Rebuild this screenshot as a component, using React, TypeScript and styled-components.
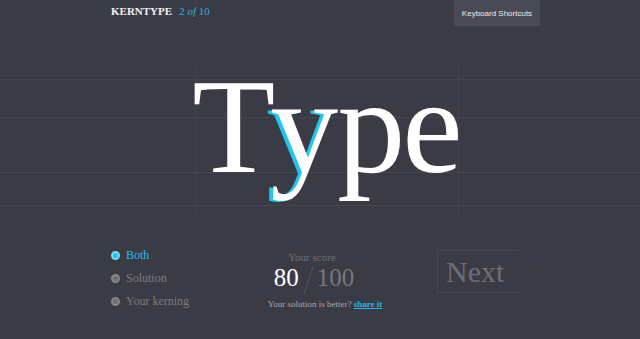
import React, { useState } from 'react';
import styled, { createGlobalStyle } from 'styled-components';

const GlobalStyle = createGlobalStyle`
  html, body {
    margin: 0;
    padding: 0;
    background: #3b3b45;
  }
  body {
    font-family: 'Liberation Serif', 'Times New Roman', serif;
  }
`;

const Page = styled.div`
  width: 640px;
  height: 339px;
  background: #3b3b45;
  overflow: hidden;
  display: flex;
  flex-direction: column;
`;

const TopBar = styled.header`
  height: 26px;
  display: flex;
  align-items: flex-start;
  justify-content: space-between;
  padding: 0 100px 0 111px;
`;

const Brand = styled.div`
  margin-top: 5px;
  display: flex;
  align-items: baseline;
  gap: 7px;
`;

const Logo = styled.span`
  font-size: 11px;
  font-weight: bold;
  color: #f2f2f2;
`;

const Counter = styled.span`
  font-size: 11px;
  color: #25b4e4;
  em {
    font-style: italic;
  }
`;

const ShortcutsButton = styled.button`
  width: 86px;
  height: 26px;
  border: none;
  background: #4a4a54;
  color: #ececec;
  font-family: 'Liberation Sans', Arial, sans-serif;
  font-size: 8px;
  padding: 0;
`;

const Stage = styled.section`
  position: relative;
  height: 219px;
  display: flex;
  justify-content: center;
  padding-top: 32px;
  box-sizing: border-box;
`;

const HLine = styled.div<{ $y: number }>`
  position: absolute;
  left: 0;
  right: 0;
  top: ${(p) => p.$y}px;
  height: 1px;
  background: #464651;
`;

const VLine = styled.div<{ $x: number }>`
  position: absolute;
  top: 36px;
  height: 154px;
  left: ${(p) => p.$x}px;
  width: 1px;
  background: #42424c;
`;

const Word = styled.div`
  position: relative;
  margin-left: 12px;
  font-size: 136px;
  line-height: 1;
  height: 136px;
  color: #ffffff;
  letter-spacing: -3px;
  white-space: nowrap;
`;

const Kerned = styled.span<{ $shift: number }>`
  display: inline-block;
  transform: translateX(${(p) => p.$shift}px);
  text-shadow: -4px 1px 0 #1fc6f2;
`;

const Bottom = styled.section`
  flex: 1;
  display: grid;
  grid-template-columns: 149px 130px 1fr;
  padding: 0 0 0 111px;
  align-items: start;
`;

const Options = styled.ul`
  list-style: none;
  margin: 0;
  padding: 0;
  padding-top: 2px;
  display: flex;
  flex-direction: column;
  gap: 6px;
`;

const Option = styled.li<{ $active?: boolean }>`
  display: flex;
  align-items: center;
  gap: 6px;
  height: 17px;
  font-size: 12px;
  color: ${(p) => (p.$active ? '#22bfee' : '#7b7b84')};
  cursor: pointer;
`;

const Dot = styled.span<{ $active?: boolean }>`
  width: 9px;
  height: 9px;
  border-radius: 50%;
  box-sizing: border-box;
  background: ${(p) => (p.$active ? '#1fc6f2' : '#6d6d73')};
  border: 2px solid ${(p) => (p.$active ? '#7ad8f2' : '#85858b')};
`;

const Score = styled.div`
  display: flex;
  flex-direction: column;
  align-items: center;
  padding-top: 6px;
`;

const ScoreLabel = styled.div`
  font-size: 11px;
  color: #6f6f78;
  transform: translateX(-13px);
`;

const ScoreRow = styled.div`
  display: flex;
  align-items: center;
  height: 30px;
  transform: translateX(-11px);
`;

const Points = styled.span<{ $dim?: boolean }>`
  font-size: 25px;
  color: ${(p) => (p.$dim ? '#777780' : '#ffffff')};
`;

const Slash = styled.span`
  width: 1px;
  height: 29px;
  margin: 4px 8px 0 9px;
  background: #55555e;
  transform: rotate(18deg);
`;

const Share = styled.div`
  margin-top: 6px;
  font-size: 9px;
  color: #a9a9b0;
  white-space: nowrap;
  a {
    color: #25b4e4;
    font-weight: bold;
    text-decoration: underline;
  }
`;

const NextButton = styled.button`
  margin-top: 5px;
  margin-left: 47px;
  width: 104px;
  height: 43px;
  padding: 0;
  border: none;
  background: transparent;
  position: relative;
  font-family: 'Liberation Serif', 'Times New Roman', serif;
  font-size: 30px;
  color: #6d6d76;
  text-align: left;
  cursor: pointer;
  svg {
    position: absolute;
    left: 0;
    top: 0;
  }
  span {
    position: relative;
    padding-left: 9px;
  }
`;

const App = () => {
  const [mode, setMode] = useState<string>('Both');
  const options = ['Both', 'Solution', 'Your kerning'];

  return (
    <Page>
      <GlobalStyle />
      <TopBar>
        <Brand>
          <Logo>KERNTYPE</Logo>
          <Counter>
            2 <em>of</em> 10
          </Counter>
        </Brand>
        <ShortcutsButton>Keyboard Shortcuts</ShortcutsButton>
      </TopBar>
      <Stage>
        <HLine $y={53} />
        <HLine $y={91} />
        <HLine $y={146} />
        <HLine $y={179} />
        <VLine $x={195} />
        <VLine $x={458} />
        <Word>
          T<Kerned $shift={-2}>y</Kerned>pe
        </Word>
      </Stage>
      <Bottom>
        <Options>
          {options.map((o) => (
            <Option key={o} $active={mode === o} onClick={() => setMode(o)}>
              <Dot $active={mode === o} />
              {o}
            </Option>
          ))}
        </Options>
        <Score>
          <ScoreLabel>Your score</ScoreLabel>
          <ScoreRow>
            <Points>80</Points>
            <Slash />
            <Points $dim>100</Points>
          </ScoreRow>
          <Share>
            Your solution is better? <a href="#">share it</a>
          </Share>
        </Score>
        <NextButton>
          <svg width="104" height="43" viewBox="0 0 104 43">
            <path d="M0.5 0.5 H82 L103 21.5 L82 42.5 H0.5 Z" fill="none" stroke="#474751" strokeWidth="1" />
          </svg>
          <span>Next</span>
        </NextButton>
      </Bottom>
    </Page>
  );
};

export default App;
